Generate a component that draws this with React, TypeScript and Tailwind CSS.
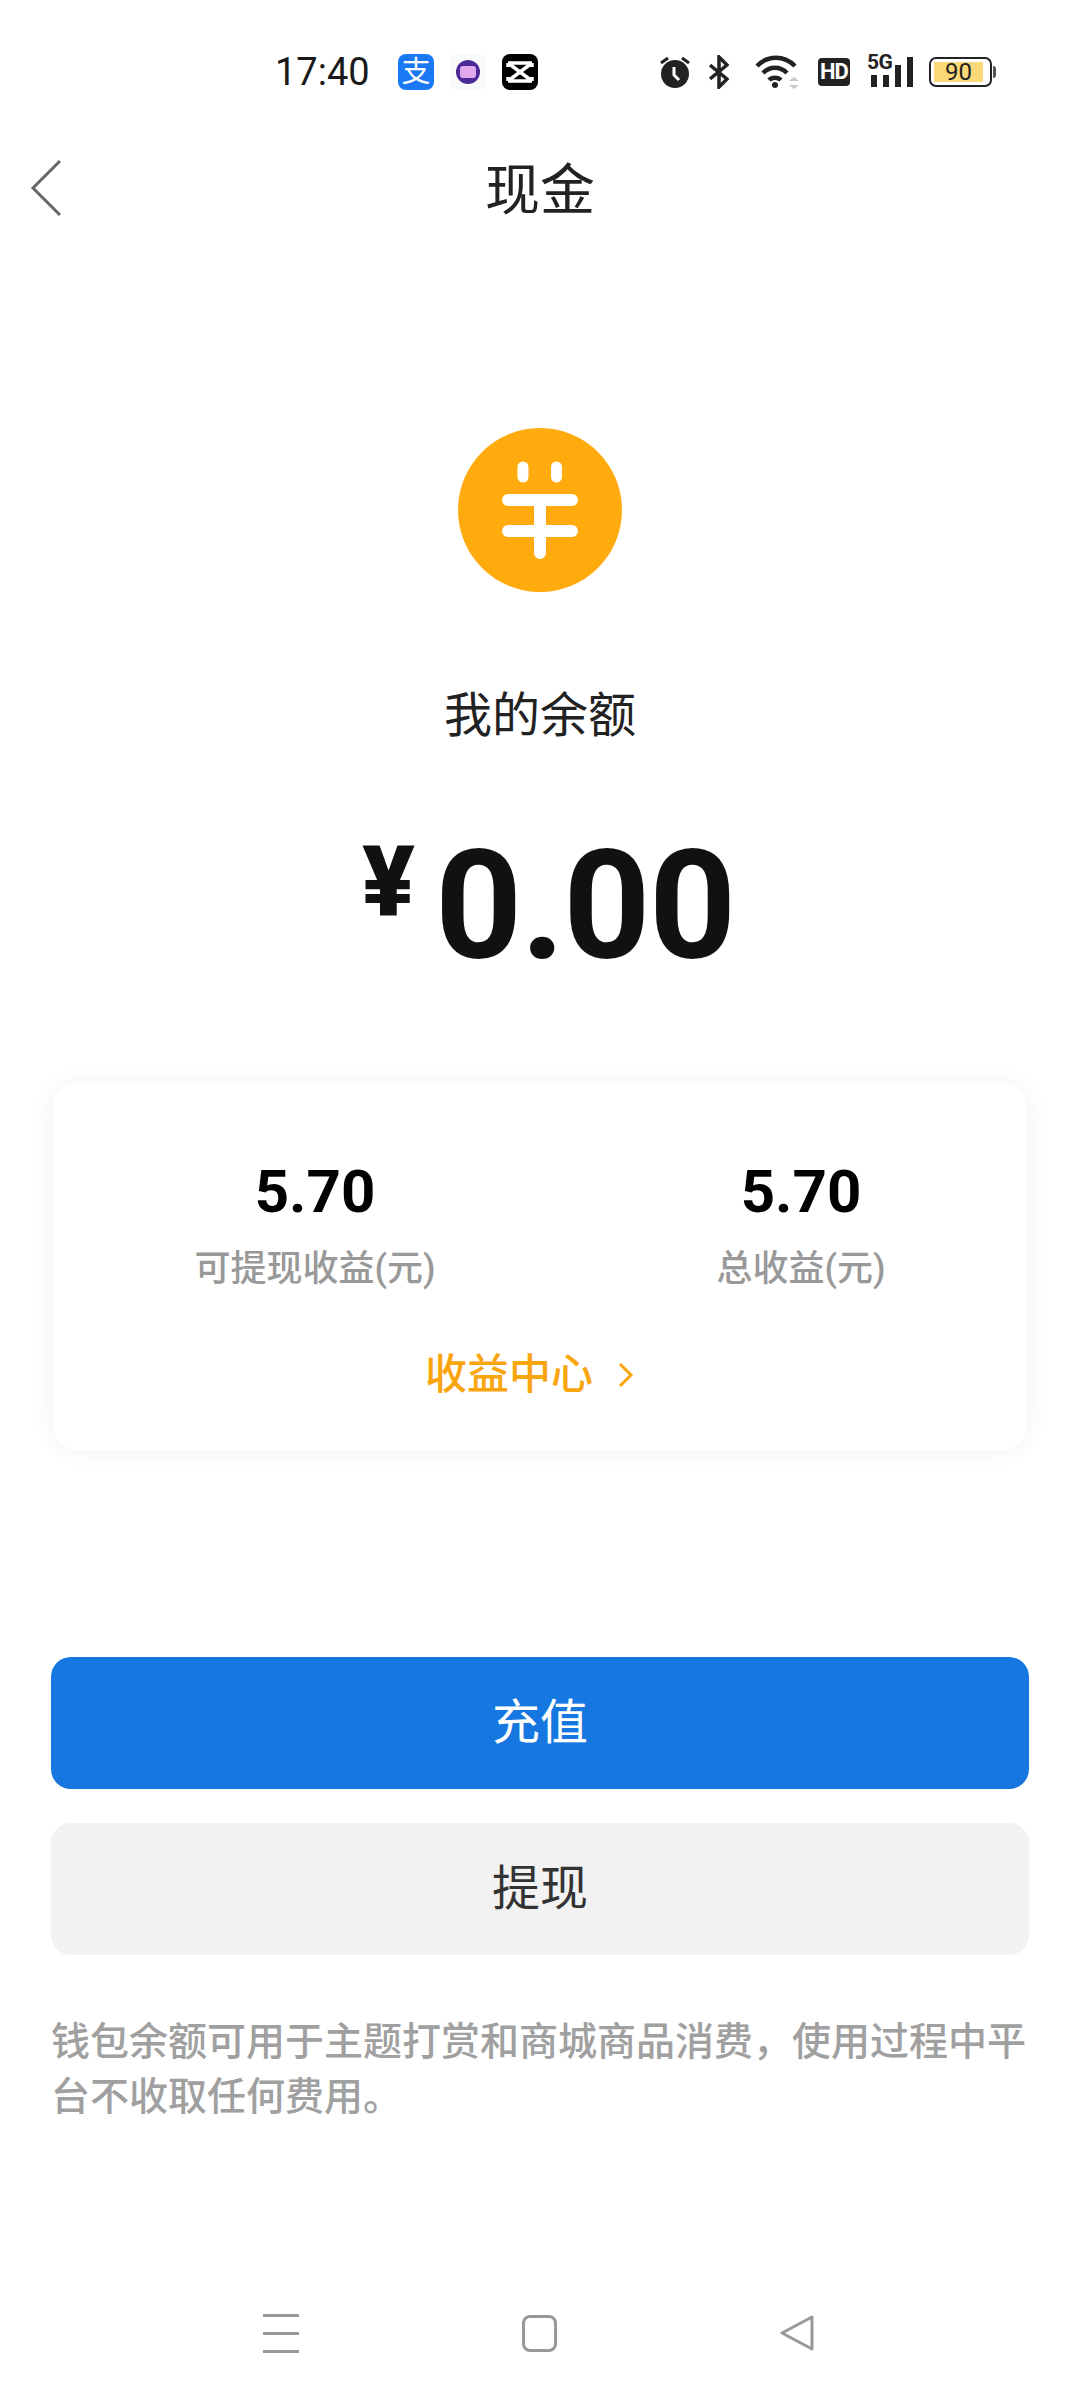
const FONT = "font-['Roboto','Noto_Sans_CJK_SC',sans-serif]";

function AlipayIcon() {
  return (
    <div className="flex h-9 w-9 items-center justify-center rounded-lg bg-[#1a78f2] text-[29px] leading-none text-white">
      支
    </div>
  );
}

function PurpleIcon() {
  return (
    <div className="flex h-9 w-9 items-center justify-center rounded-lg bg-[#fafafa]">
      <div className="flex h-6 w-6 items-center justify-center rounded-full bg-[#4b2a96]">
        <div className="h-3 w-4 rounded-[3px] bg-[#e2a8ec]" />
      </div>
    </div>
  );
}

function CapcutIcon() {
  return (
    <div className="flex h-9 w-9 items-center justify-center rounded-lg bg-black">
      <svg width="28" height="24" viewBox="0 0 28 24" fill="none" stroke="white" strokeWidth="3.5" strokeLinejoin="round">
        <path d="M2 3h24M2 21h24M2 3l24 18M26 3L2 21" />
        <path d="M2 3v4M26 3v4M2 21v-4M26 21v-4" />
      </svg>
    </div>
  );
}

function StatusIcons() {
  return (
    <div className="ml-auto mr-[84px] flex items-center">
      <svg width="30" height="32" viewBox="0 0 30 32" className="mr-[19px]">
        <circle cx="15" cy="18" r="14" fill="#222" />
        <path d="M1 7l7-5M29 7l-7-5" stroke="#222" strokeWidth="3" />
        <path d="M14 11v8l5 5" stroke="white" strokeWidth="3" fill="none" />
      </svg>
      <svg width="20" height="34" viewBox="0 0 20 34" fill="none" stroke="#222" strokeWidth="3.5" className="mr-[26px]">
        <path d="M1 10l17 14-8 8V2l8 8L1 24" />
      </svg>
      <svg width="44" height="34" viewBox="0 0 44 34" fill="none" className="mr-[19px]">
        <path d="M2 11c11-11 27-11 38 0" stroke="#222" strokeWidth="4.5" />
        <path d="M8 18c7-7 17-7 24 0" stroke="#222" strokeWidth="4.5" />
        <path d="M14 25c3-3 9-3 12 0" stroke="#222" strokeWidth="4.5" />
        <circle cx="20" cy="30" r="3" fill="#222" />
        <path d="M34 26l5-4 5 4zM34 30l5 4 5-4z" fill="#c8c8c8" />
      </svg>
      <div className="mr-[17px] flex h-7 w-8 items-center justify-center rounded-[4px] bg-[#222] text-[22px] font-bold leading-none tracking-[-1px] text-white">
        HD
      </div>
      <div className="relative mr-[16px] h-[30px] w-[46px]">
        <span className="absolute left-0 top-[-5px] text-[21px] font-bold leading-[20px] tracking-[-0.5px] text-[#222]">5G</span>
        <div className="absolute bottom-0 left-[4px] flex items-end gap-[6px]">
          <div className="h-[12px] w-[6px] bg-[#222]" />
          <div className="h-[12px] w-[6px] bg-[#222]" />
          <div className="h-[22px] w-[6px] bg-[#222]" />
          <div className="h-[30px] w-[6px] bg-[#222]" />
        </div>
      </div>
      <div className="flex items-center">
        <div className="flex h-[30px] w-[63px] items-center rounded-[7px] border-2 border-[#222] p-[3px]">
          <div className="flex h-full w-[49px] items-center justify-center bg-[#fbd878] text-[24px] leading-none text-[#222]">
            90
          </div>
        </div>
        <div className="ml-[1px] h-[12px] w-[3px] rounded-r-sm bg-[#555]" />
      </div>
    </div>
  );
}

function StatBlock({ value, label }: { value: string; label: string }) {
  return (
    <div className="flex w-[486px] shrink-0 flex-col items-center">
      <div className="h-[68px] text-[60px] font-bold leading-[68px] text-black">{value}</div>
      <div className="mt-[18px] h-[50px] text-[36px] font-medium leading-[50px] text-[#999999]">{label}</div>
    </div>
  );
}

export default function App() {
  return (
    <div className={`h-[2400px] w-[1080px] overflow-hidden bg-white ${FONT}`}>
      {/* status bar */}
      <div className="flex h-[144px] items-center pl-[275px]">
        <span className="w-[123px] text-[38px] leading-none text-[#1a1a1a]">17:40</span>
        <div className="flex items-center gap-[16px]">
          <AlipayIcon />
          <PurpleIcon />
          <CapcutIcon />
        </div>
        <StatusIcons />
      </div>

      {/* title */}
      <div className="relative flex h-[88px] items-center justify-center">
        <svg width="34" height="60" viewBox="0 0 34 60" fill="none" stroke="#666" strokeWidth="3" className="absolute left-[30px] top-[14px]">
          <path d="M30 3L3 30l27 27" />
        </svg>
        <span className="mt-[5px] text-[55px] leading-none text-[#222]">现金</span>
      </div>

      {/* balance */}
      <div className="mt-[196px] flex justify-center">
        <svg width="164" height="164" viewBox="0 0 164 164">
          <circle cx="82" cy="82" r="82" fill="#ffab0e" />
          <g stroke="white" strokeLinecap="round" fill="none">
            <path d="M65 39v10M98.5 39v10" strokeWidth="11" />
            <path d="M50 72h64M50 103h64M82 72v53" strokeWidth="12" />
          </g>
        </svg>
      </div>
      <div className="mt-[92px] h-[64px] text-center text-[48px] leading-[64px] text-[#222]">我的余额</div>
      <div className="mt-[78px] flex h-[157px] pl-[362px] font-bold text-[#111111]">
        <span className="mt-[2px] text-[98px] font-black leading-[110px]">¥</span>
        <span className="ml-[20px] text-[152px] leading-[160px] tracking-[-1.5px]">0.00</span>
      </div>

      {/* earnings card */}
      <div className="mx-[53px] mt-[100px] h-[367px] rounded-[24px] bg-white pt-[75px] shadow-[0_0_24px_rgba(0,0,0,0.06)]">
        <div className="flex pl-[19px]">
          <StatBlock value="5.70" label="可提现收益(元)" />
          <StatBlock value="5.70" label="总收益(元)" />
        </div>
        <div className="mt-[53px] flex items-center justify-center pr-[20px] text-[42px] font-medium leading-[56px] text-[#f9a50e]">
          <span>收益中心</span>
          <svg width="18" height="28" viewBox="0 0 18 28" fill="none" stroke="#f9a50e" strokeWidth="3" className="ml-[24px]">
            <path d="M3 3l11 11L3 25" />
          </svg>
        </div>
      </div>

      {/* actions */}
      <div className="mx-[51px] mt-[207px] flex flex-col gap-[34px]">
        <div className="flex h-[132px] items-center justify-center rounded-[20px] bg-[#1677e0] text-[48px] text-white">充值</div>
        <div className="flex h-[132px] items-center justify-center rounded-[20px] bg-[#f2f2f2] text-[48px] text-[#333333]">提现</div>
      </div>
      <p className="mx-[51px] mt-[60px] text-[39px] font-medium leading-[55px] text-[#a0a0a0]">
        钱包余额可用于主题打赏和商城商品消费，使用过程中平台不收取任何费用。
      </p>

      {/* nav bar */}
      <div className="mt-[188px] flex h-[40px] items-center pl-[263px]">
        <div className="flex w-[259px] flex-col gap-[15px]">
          <div className="h-[3px] w-[36px] bg-[#999999]" />
          <div className="h-[3px] w-[36px] bg-[#999999]" />
          <div className="h-[3px] w-[36px] bg-[#999999]" />
        </div>
        <div className="h-[37px] w-[35px] rounded-[8px] border-[3px] border-[#999999]" />
        <svg width="36" height="38" viewBox="0 0 36 38" fill="none" stroke="#999" strokeWidth="3" strokeLinejoin="round" className="ml-[222px]">
          <path d="M33 3L3 19l30 16z" />
        </svg>
      </div>
    </div>
  );
}
